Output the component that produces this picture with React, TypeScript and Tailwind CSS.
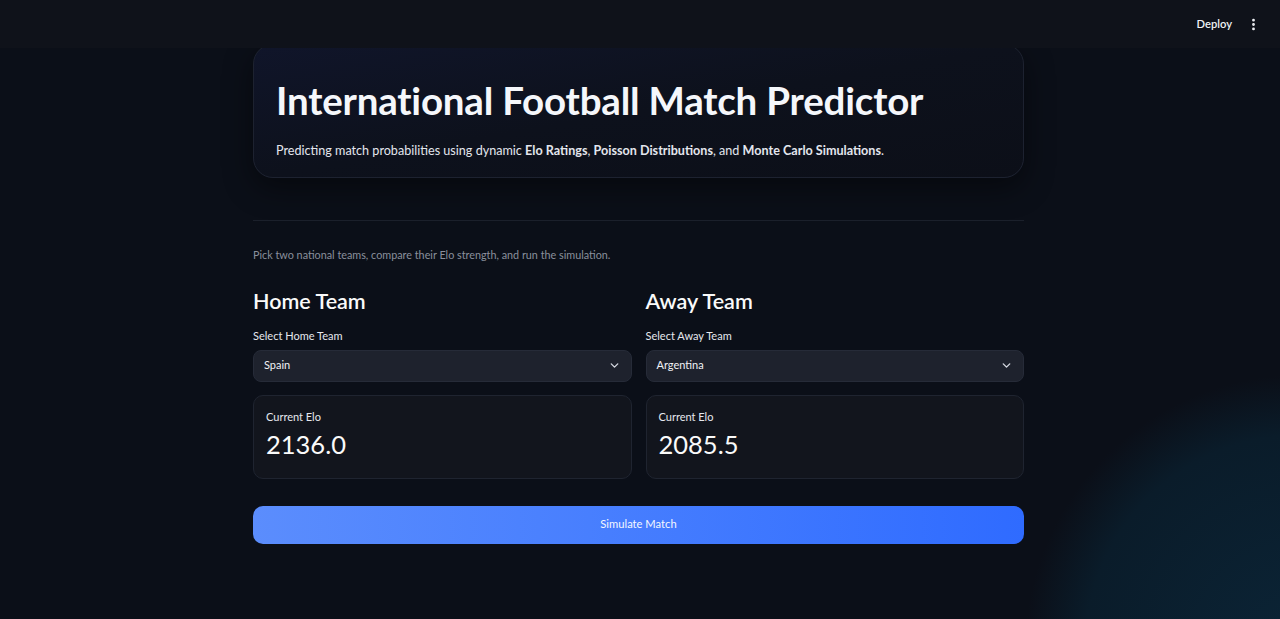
import { ChevronDown, EllipsisVertical } from "lucide-react";

const teams = [
  { side: "Home", team: "Spain", elo: "2136.0" },
  { side: "Away", team: "Argentina", elo: "2085.5" },
];

const TeamColumn = ({ side, team, elo }: { side: string; team: string; elo: string }) => (
  <div className="flex flex-col">
    <h3 className="text-[21.5px] font-semibold leading-none text-[#fafafa]">{side} Team</h3>

    <label className="mt-[17px] text-[11px] leading-none text-[#e6e8ee]">Select {side} Team</label>
    <div className="mt-[9px] h-[32px] rounded-lg bg-[#1e222d] border border-[#262b38] px-[10px] flex items-center justify-between">
      <span className="text-[11px] text-[#f0f2f6]">{team}</span>
      <ChevronDown className="h-[13px] w-[13px] text-[#d5d8e0]" strokeWidth={2.5} />
    </div>

    <div className="mt-[13px] h-[84px] rounded-[10px] border border-[#1f2430] bg-[#12151d] px-[12px] pt-[15px]">
      <p className="text-[11px] leading-none text-[#e6e8ee]">Current Elo</p>
      <p className="mt-[10px] text-[25.5px] leading-none text-[#fafafa]">{elo}</p>
    </div>
  </div>
);

export default function App() {
  return (
    <div
      className="relative min-h-[619px] w-full overflow-hidden border-b-2 border-[#34363b] bg-[radial-gradient(circle_at_1300px_650px,#0b2436_0px,#0a1c2a_215px,#0b0f18_275px)] text-[#fafafa]"
      style={{ fontFamily: "Lato, 'Noto Sans', sans-serif" }}
    >
      {/* Top bar, sits over the scrolled content */}
      <header className="fixed inset-x-0 top-0 z-10 h-12 bg-[#0f121a] flex items-center justify-end pr-[19px] gap-[14px]">
        <span className="text-[11.2px] font-semibold text-[#f0f2f6]">Deploy</span>
        <EllipsisVertical className="h-[15px] w-[15px] text-[#f0f2f6]" strokeWidth={2.5} />
      </header>

      <main className="ml-[253px] w-[771px] pt-[44px] pb-[75px]">
        {/* Hero card */}
        <section className="h-[134px] rounded-[20px] border border-[#1d2230] bg-gradient-to-br from-[#10152a] via-[#0d111c] to-[#0c0f18] px-[22px] pt-[31px] shadow-[0_10px_30px_rgba(0,0,0,0.45)]">
          <h1 className="text-[38.5px] font-bold leading-[48px] tracking-[-0.2px] text-[#f5f7fb]">
            International Football Match Predictor
          </h1>
          <p className="mt-[18px] text-[12.6px] text-[#e3e6ee]">
            Predicting match probabilities using dynamic <b>Elo Ratings</b>, <b>Poisson Distributions</b>, and{" "}
            <b>Monte Carlo Simulations</b>.
          </p>
        </section>

        <hr className="mt-[42px] border-t border-[#1b202b]" />

        <p className="mt-[26px] text-[10.8px] text-[#8a8f9c]">
          Pick two national teams, compare their Elo strength, and run the simulation.
        </p>

        <div className="mt-[28px] grid grid-cols-2 gap-[14px]">
          {teams.map((t) => (
            <TeamColumn key={t.side} {...t} />
          ))}
        </div>

        <button className="mt-[27px] h-[38px] w-full rounded-[10px] bg-gradient-to-r from-[#5b8dfd] to-[#2f6bff] text-[11.2px] text-[#f4f7ff]">
          Simulate Match
        </button>
      </main>
    </div>
  );
}
